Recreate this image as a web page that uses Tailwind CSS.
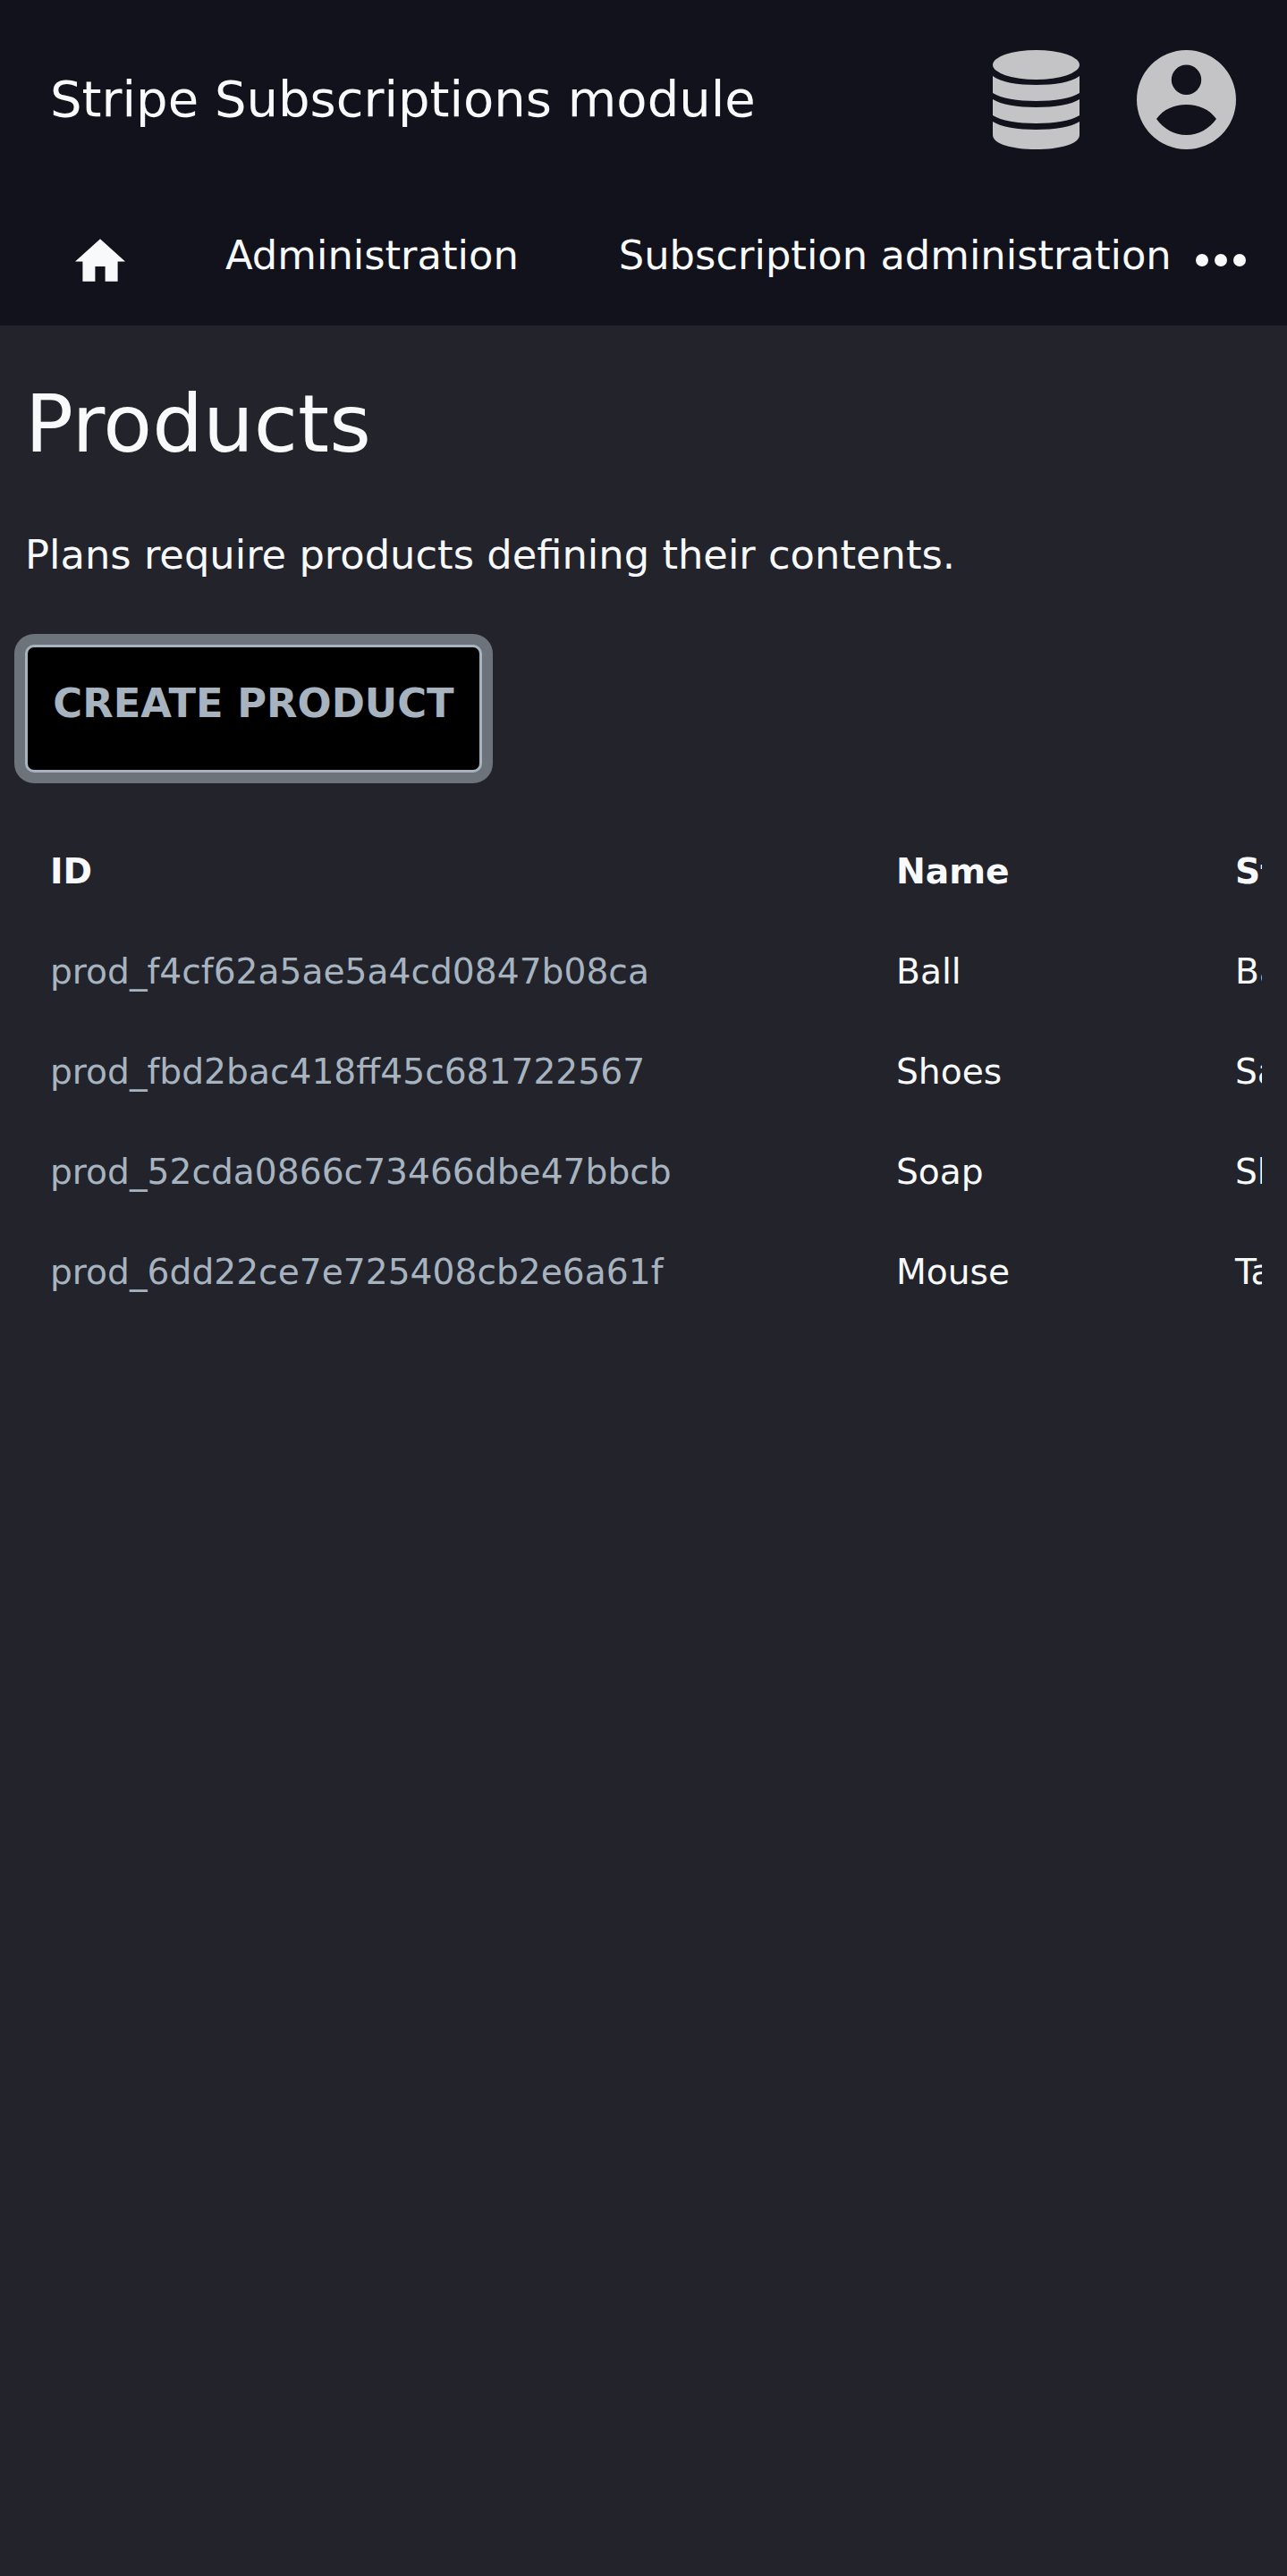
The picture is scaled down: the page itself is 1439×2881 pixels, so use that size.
<!DOCTYPE html>
<html lang="en">
<head>
    <meta charset="UTF-8">
    <title>Products</title>
    <script src="https://cdn.jsdelivr.net/npm/@tailwindcss/browser@4"></script>
</head>
<body class="bg-[#22232b] min-h-[2881px] font-['DejaVu_Sans',sans-serif] text-[#f8f9fa] overflow-hidden">
    <!-- Header -->
    <header class="bg-[#11121b] h-[364px] flex flex-col">
        <div class="flex items-start h-[224px] pl-[56px] pr-[57px]">
            <h1 class="text-[56px] leading-[66px] mt-[78px] flex-1 whitespace-nowrap">Stripe Subscriptions module</h1>
            <svg class="w-[97px] h-[111px] mt-[56px] text-[#c4c4c6]" viewBox="0 0 97 111" fill="currentColor">
                <ellipse cx="48.5" cy="16.5" rx="48.5" ry="16.5"/>
                <path d="M0 29c9 7 28 10 48.500 10S88 36 97 29v19c-9 6-28 9-48.500 9S9 54 0 48z"/>
                <path d="M0 55c9 6 28 9 48.500 9S88 61 97 55v18c-9 6-28 9-48.500 9S9 79 0 73z"/>
                <path d="M0 80c9 6 28 9 48.500 9S88 86 97 80v15c0 10-22 16-48.500 16S0 105 0 95z"/>
            </svg>
            <svg class="w-[111px] h-[111px] mt-[56px] ml-[64px] text-[#c4c4c6]" viewBox="0 0 111 111" fill="currentColor">
                <path fill-rule="evenodd" d="M55.500 0a55.500 55.500 0 1 0 0 111a55.500 55.500 0 1 0 0-111zM55.500 16.500a16.700 16.700 0 1 1 0 33.400a16.700 16.700 0 1 1 0-33.400zM22 77c8-11 20-16 33.500-16S81 66 89 77c-8 11-20 18-33.500 18S30 88 22 77z"/>
            </svg>
        </div>
        <nav class="flex items-start text-[44.8px] leading-[54px] whitespace-nowrap">
            <svg class="w-[56px] h-[48px] ml-[84px] mt-[43px] shrink-0" viewBox="2 3 20 17" fill="currentColor">
                <path d="M10 20v-6h4v6h5v-8h3L12 3 2 12h3v8z"/>
            </svg>
            <span class="ml-[112px] mt-[35px]">Administration</span>
            <span class="ml-[112px] mt-[35px]">Subscription administration</span>
            <svg class="w-[56px] h-[14px] ml-[27px] mt-[60px] shrink-0" viewBox="0 0 56 14" fill="currentColor">
                <circle cx="7" cy="7" r="7"/>
                <circle cx="28" cy="7" r="7"/>
                <circle cx="49" cy="7" r="7"/>
            </svg>
        </nav>
    </header>

    <!-- Page content -->
    <main class="px-[28px]">
        <h2 class="text-[89.6px] leading-[108px] mt-[56px]">Products</h2>
        <p class="text-[44.8px] leading-[54px] mt-[66px]">Plans require products defining their contents.</p>
        <button class="mt-[73px] block w-[511px] h-[143px] bg-black border-[3px] border-[#a7b4c0] rounded-[10px] ring-[12px] ring-[#6c737b] text-[#a7b4c0] font-bold text-[44.8px] leading-[54px] pb-[12px] whitespace-nowrap">CREATE PRODUCT</button>

        <div class="mt-[55px] w-[1383px] overflow-hidden">
            <table class="table-fixed w-[2000px] text-[39.2px] text-left">
                <thead>
                    <tr class="h-[112px] font-bold">
                        <th class="w-[946px] pl-[28px] font-bold">ID</th>
                        <th class="w-[379px] pl-[28px] font-bold">Name</th>
                        <th class="pl-[28px] font-bold">Statement descriptor</th>
                    </tr>
                </thead>
                <tbody>
                    <tr class="h-[112px]">
                        <td class="pl-[28px] text-[#a7b4c0]">prod_f4cf62a5ae5a4cd0847b08ca</td>
                        <td class="pl-[28px]">Ball</td>
                        <td class="pl-[28px]">Ball</td>
                    </tr>
                    <tr class="h-[112px]">
                        <td class="pl-[28px] text-[#a7b4c0]">prod_fbd2bac418ff45c681722567</td>
                        <td class="pl-[28px]">Shoes</td>
                        <td class="pl-[28px]">Sandals</td>
                    </tr>
                    <tr class="h-[112px]">
                        <td class="pl-[28px] text-[#a7b4c0]">prod_52cda0866c73466dbe47bbcb</td>
                        <td class="pl-[28px]">Soap</td>
                        <td class="pl-[28px]">Shampoo</td>
                    </tr>
                    <tr class="h-[112px]">
                        <td class="pl-[28px] text-[#a7b4c0]">prod_6dd22ce7e725408cb2e6a61f</td>
                        <td class="pl-[28px]">Mouse</td>
                        <td class="pl-[28px]">Tablet</td>
                    </tr>
                </tbody>
            </table>
        </div>
    </main>
</body>
</html>
